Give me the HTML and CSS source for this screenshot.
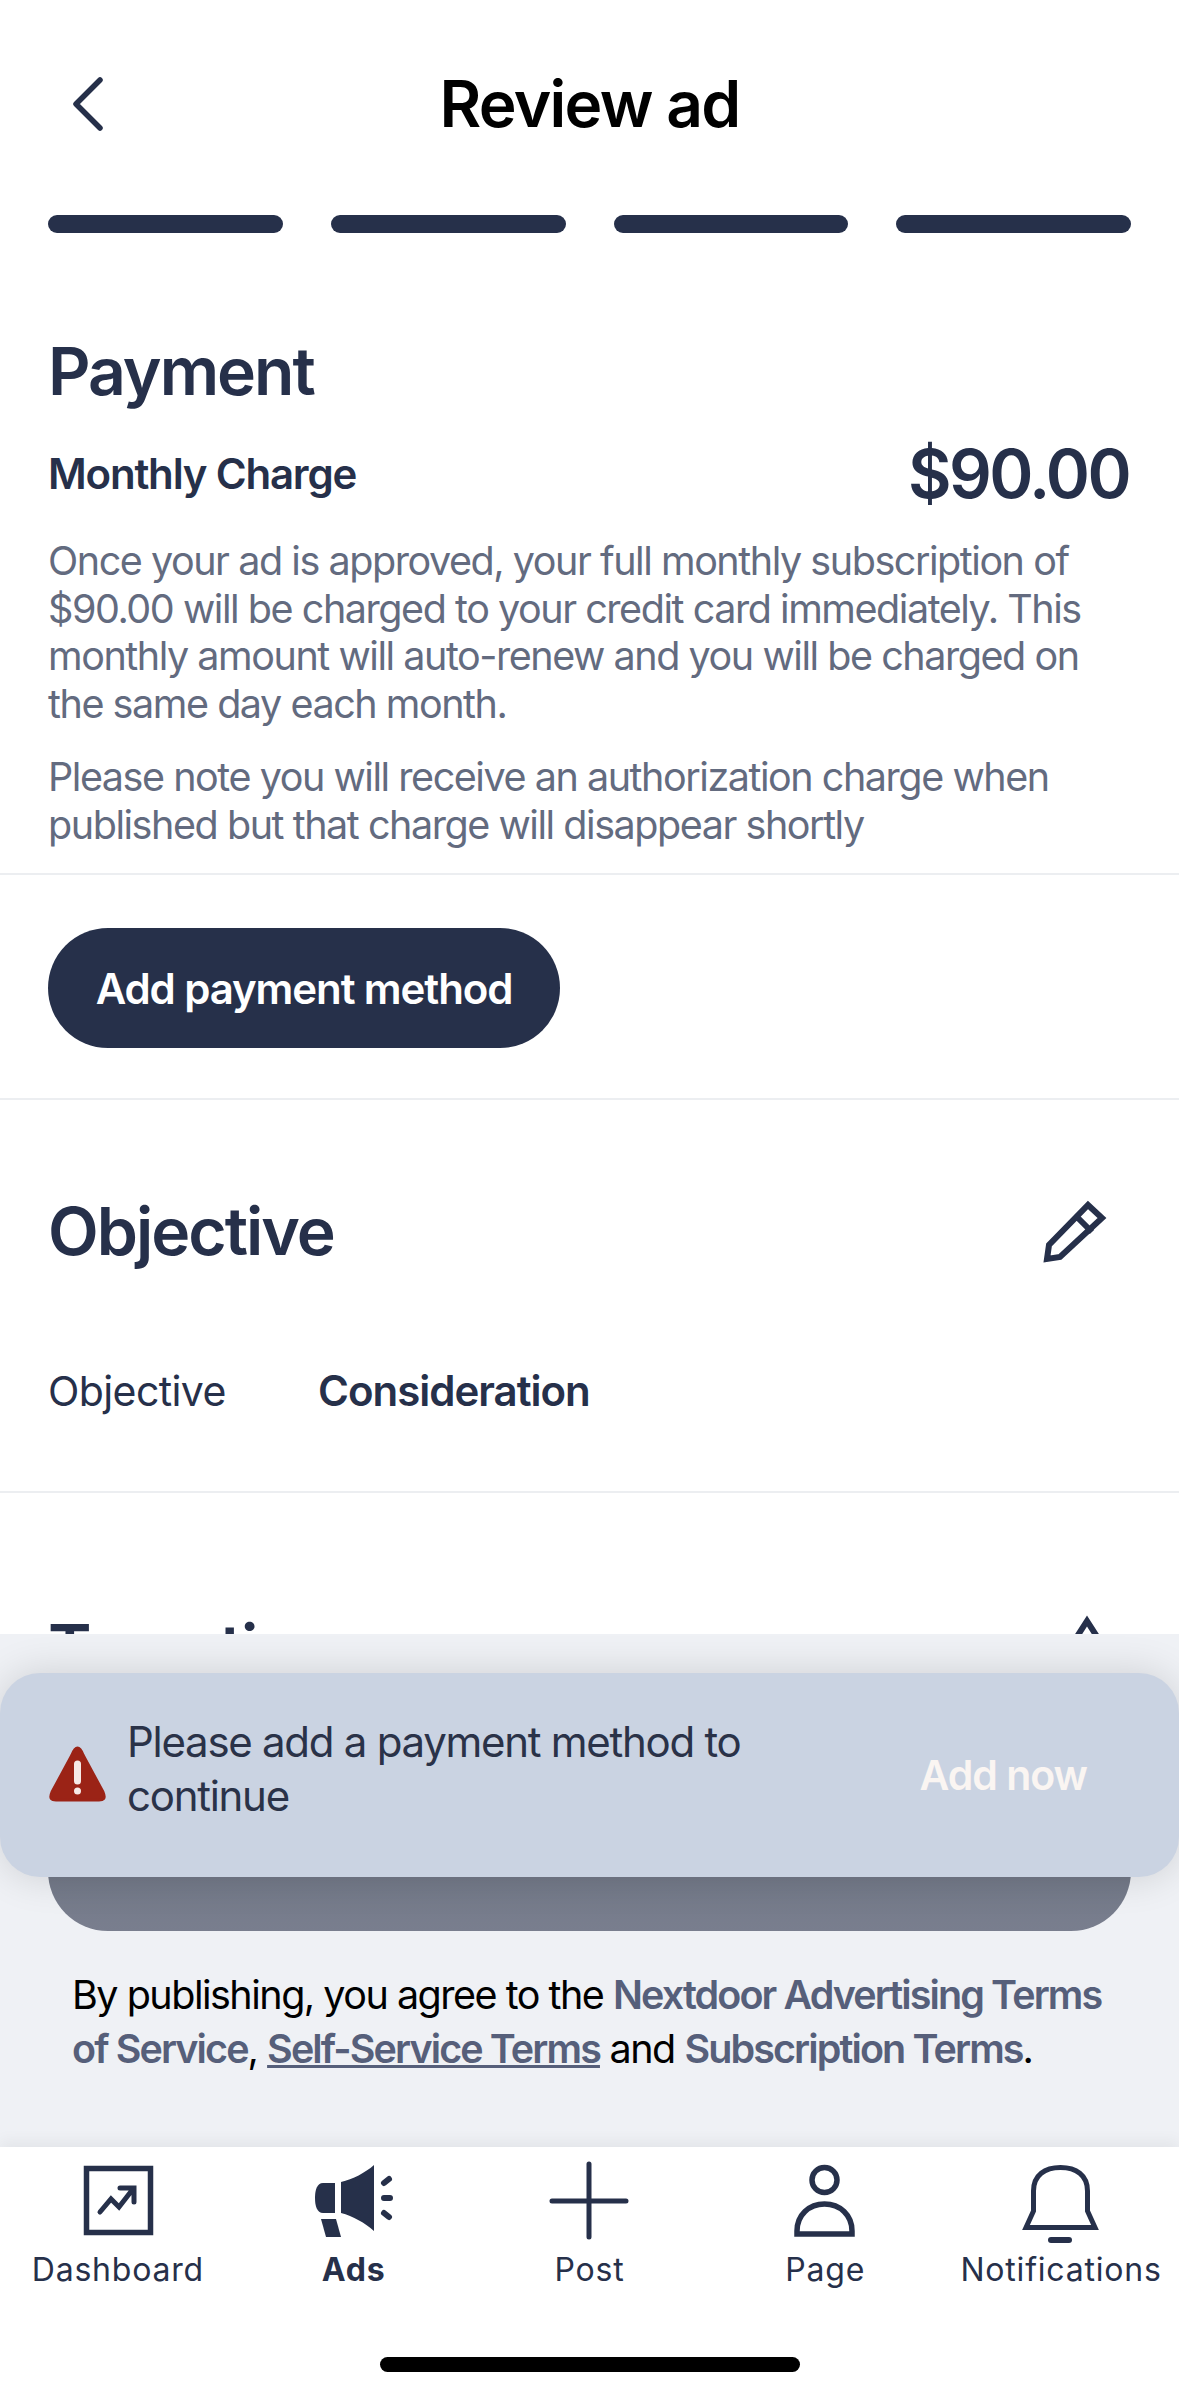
FILE: index.html
```html
<!DOCTYPE html>
<html>
<head>
    <title>Review ad</title>
    <link rel="stylesheet" href="styles.css">
</head>
<body>
    <div class="page">
        <div class="main">
            <div class="header">
                <svg class="back" width="40" height="60" viewBox="0 0 40 60"><path d="M32 6 L8 30 L32 54" fill="none" stroke="#26304a" stroke-width="5.5" stroke-linecap="round" stroke-linejoin="round"/></svg>
                <h1>Review ad</h1>
            </div>
            <div class="steps">
                <div class="step"></div>
                <div class="step"></div>
                <div class="step"></div>
                <div class="step"></div>
            </div>

            <div class="section payment">
                <h2>Payment</h2>
                <div class="charge-row">
                    <span class="charge-label">Monthly Charge</span>
                    <span class="charge-amount">$90.00</span>
                </div>
                <p>Once your ad is approved, your full monthly subscription of $90.00 will be charged to your credit card immediately. This monthly amount will auto-renew and you will be charged on the same day each month.</p>
                <p class="note">Please note you will receive an authorization charge when published but that charge will disappear shortly</p>
            </div>

            <div class="section add-method">
                <button class="btn-add">Add payment method</button>
            </div>

            <div class="section objective">
                <div class="section-head">
                    <h2>Objective</h2>
                    <svg width="70" height="70" viewBox="0 0 70 70"><path d="M49 9 L63 22 L21 61 L8 63 L10 49 Z M39 22 L53 36" fill="none" stroke="#26304a" stroke-width="6"/></svg>
                </div>
                <div class="detail-row">
                    <span class="detail-label">Objective</span>
                    <span class="detail-value">Consideration</span>
                </div>
            </div>

            <div class="section targeting">
                <div class="section-head">
                    <h2>Targeting</h2>
                    <svg width="44" height="76" viewBox="0 0 44 76"><path d="M6 36 L22 11 L38 36" fill="none" stroke="#26304a" stroke-width="6"/></svg>
                </div>
            </div>
        </div>

        <div class="footer">
            <button class="btn-publish"></button>
            <div class="terms">By publishing, you agree to the <a>Nextdoor Advertising Terms of Service</a>, <a class="underlined">Self-Service Terms</a> and <a>Subscription Terms</a>.</div>

            <div class="toast">
                <svg class="toast-icon" width="60" height="60" viewBox="0 0 60 60">
                    <path d="M29.5 3 C32 3 33.5 6 35 10 L55 47 C58 54 55 55 51 55 L8 55 C4 55 1 54 4 47 L24 10 C25.5 6 27 3 29.5 3 Z" fill="#9b2316" stroke="#9b2316" stroke-width="3" stroke-linejoin="round"/>
                    <path d="M29.5 19 V36" stroke="#f6e9e6" stroke-width="7" stroke-linecap="round"/>
                    <circle cx="29.5" cy="46" r="3.5" fill="#f6e9e6"/>
                </svg>
                <div class="toast-text">Please add a payment method to continue</div>
                <div class="toast-action">Add now</div>
            </div>
        </div>

        <div class="tabbar">
            <div class="tabs">
                <div class="tab">
                    <svg width="90" height="90" viewBox="0 0 90 90" fill="none" stroke="#26304a">
                        <rect x="13.5" y="10.5" width="64" height="64" stroke-width="5.5"/>
                        <path d="M27 54 L38 41 L46 49 L60 31 M47 30 H61 V44" stroke-width="5" stroke-linecap="round"/>
                    </svg>
                    <span>Dashboard</span>
                </div>
                <div class="tab active">
                    <svg width="90" height="90" viewBox="0 0 90 90" fill="#26304a">
                        <path d="M14 25 H26 V55 H14 C8 55 6 48 6 40 C6 32 8 25 14 25 Z"/>
                        <path d="M32 24 C44 21 56 15 65 7 V73 C56 65 44 58 32 55 Z"/>
                        <path d="M12 61 H27 L32 79 H17 Z"/>
                        <path d="M75 25 L80 21 M75 40 H81 M75 55 L80 59" stroke="#26304a" stroke-width="6" stroke-linecap="round" fill="none"/>
                    </svg>
                    <span>Ads</span>
                </div>
                <div class="tab">
                    <svg width="90" height="90" viewBox="0 0 90 90" fill="none" stroke="#26304a" stroke-width="5" stroke-linecap="round">
                        <path d="M45 6 V79 M8 43 H82"/>
                    </svg>
                    <span>Post</span>
                </div>
                <div class="tab">
                    <svg width="90" height="90" viewBox="0 0 90 90" fill="none" stroke="#26304a" stroke-width="5.5">
                        <circle cx="44.5" cy="22" r="12.5"/>
                        <path d="M17 76 V73 C17 57 29 46 44.5 46 C60 46 72 57 72 73 V76 Z"/>
                    </svg>
                    <span>Page</span>
                </div>
                <div class="tab">
                    <svg width="90" height="90" viewBox="0 0 90 90" fill="none" stroke="#26304a" stroke-width="5">
                        <path d="M10 69.5 L17.5 53 V33 C17.5 17 29 9.5 44.5 9.5 C60 9.5 71.5 17 71.5 33 V53 L79 69.5 Z"/>
                        <rect x="32" y="79" width="24" height="6" rx="3" fill="#26304a" stroke="none"/>
                    </svg>
                    <span>Notifications</span>
                </div>
            </div>
            <div class="home-bar"></div>
        </div>
    </div>
</body>
</html>
```

FILE: styles.css
```css
* { box-sizing: border-box; }
body { margin: 0; background-color: #fff; font-family: Inter, "Noto Sans", sans-serif; color: #26304a; }
.page { width: 1179px; height: 2396px; display: flex; flex-direction: column; overflow: hidden; }
.main { height: 1634px; overflow: hidden; flex: none; }

.header { height: 215px; position: relative; display: flex; align-items: flex-start; justify-content: center; padding-top: 64px; }
.header h1 { margin: 0; font-size: 64px; line-height: 80px; font-weight: 600; color: #000; letter-spacing: -1.7px; }
.back { position: absolute; left: 68px; top: 74px; }

.steps { display: flex; gap: 48px; padding: 0 48px; }
.step { flex: 1; height: 18px; border-radius: 9px; background-color: #26304a; }

.section { padding: 0 48px; border-bottom: 2px solid #eceef1; }
h2 { margin: 0; font-size: 66px; line-height: 76px; font-weight: 600; letter-spacing: -2px; }

.payment { padding-top: 100px; padding-bottom: 24px; }
.charge-row { display: flex; justify-content: space-between; align-items: center; height: 80px; margin-top: 24px; padding-right: 2px; }
.charge-label { font-size: 42px; font-weight: 600; letter-spacing: -1.2px; }
.charge-amount { font-size: 67px; font-weight: 600; letter-spacing: -2.6px; }
.payment p { margin: 25px 0 0; font-size: 39.5px; line-height: 47.5px; color: #636b7f; letter-spacing: -1.45px; }
.payment p.note { margin-top: 26px; }

.add-method { padding-top: 53px; padding-bottom: 50px; }
.btn-add { display: block; width: 512px; height: 120px; border: 0; border-radius: 60px; background-color: #26304a; color: #fff; font-family: Inter, sans-serif; font-size: 42px; font-weight: 600; letter-spacing: -1.1px; }

.section-head { display: flex; justify-content: space-between; align-items: center; padding-right: 22px; }
.objective { padding-top: 93px; padding-bottom: 75px; }
.detail-row { display: flex; margin-top: 97px; font-size: 41px; line-height: 50px; letter-spacing: -0.6px; }
.detail-label { width: 270px; }
.detail-value { font-size: 42px; font-weight: 600; letter-spacing: -1px; }

.targeting { padding-top: 117px; border-bottom: 0; }

.footer { position: relative; height: 513px; flex: none; background-color: #eff1f5; padding-top: 177px; }
.btn-publish { display: block; width: 1083px; height: 120px; margin: 0 48px; border: 0; border-radius: 60px; background: linear-gradient(#6c7482, #797e8e); }
.terms { margin-top: 37px; padding: 0 60px 0 72px; font-size: 39.5px; line-height: 54px; color: #000; letter-spacing: -1.5px; }
.terms a { color: #565f7a; font-weight: 600; letter-spacing: -1.9px; }
.terms a.underlined { text-decoration: underline; }

.toast { position: absolute; left: 0; right: 0; top: 39px; height: 204px; display: flex; align-items: center; padding: 0 92px 0 48px; border-radius: 40px; background-color: #cad3e2; box-shadow: 0 0 40px rgba(0, 0, 0, 0.14); }
.toast-icon { flex: none; }
.toast-text { width: 640px; margin-left: 19px; padding-bottom: 12px; font-size: 42px; line-height: 54px; color: #2a3248; letter-spacing: -1.27px; }
.toast-action { margin-left: auto; font-size: 41px; font-weight: 600; color: #faf5f2; letter-spacing: -1px; }

.tabbar { flex: 1; background-color: #fff; box-shadow: 0 -6px 14px rgba(0, 0, 0, 0.05); position: relative; padding-top: 11px; }
.tabs { display: grid; grid-template-columns: repeat(5, 1fr); }
.tab { display: flex; flex-direction: column; align-items: center; gap: 2px; }
.tab span { font-size: 32px; line-height: 40px; letter-spacing: 0.8px; }
.tab.active span { font-weight: 700; }
.home-bar { width: 420px; height: 15px; margin: 67px auto 0; border-radius: 8px; background-color: #000; }
```
